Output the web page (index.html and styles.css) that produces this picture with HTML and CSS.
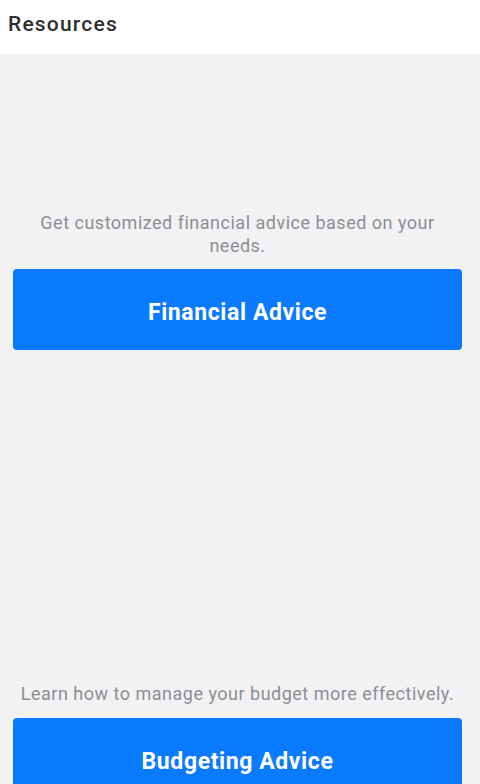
FILE: index.html
```html
<!DOCTYPE html>
<html>
<head>
<meta charset="utf-8">
<link rel="stylesheet" href="styles.css">
</head>
<body>
<header class="header"><h1 class="title">Resources</h1></header>
<main class="content">
  <section class="block block-first">
    <p class="desc">Get customized financial advice based on your needs.</p>
    <button class="btn">Financial Advice</button>
  </section>
  <section class="block block-second">
    <p class="desc">Learn how to manage your budget more effectively.</p>
    <button class="btn">Budgeting Advice</button>
  </section>
</main>
</body>
</html>
```
FILE: styles.css
```css
html, body {
  margin: 0;
  padding: 0;
  height: 100%;
  overflow: hidden;
}
body {
  font-family: Roboto, "Noto Sans", sans-serif;
  background: #f2f1f4;
}
.header {
  background: #ffffff;
  height: 54px;
  display: flex;
  align-items: flex-start;
  padding-left: 8px;
}
.title {
  margin: 0;
  margin-top: 11px;
  font-size: 21px;
  line-height: 26px;
  letter-spacing: 1.2px;
  font-weight: 500;
  color: #2e2e2e;
}
.content {
  display: flex;
  flex-direction: column;
  padding: 0 18px 0 13px;
}
.block {
  display: flex;
  flex-direction: column;
  align-items: stretch;
}
.block-first {
  margin-top: 157px;
}
.block-second {
  margin-top: 332px;
}
.desc {
  margin: 0 0 12px;
  font-size: 18px;
  line-height: 23px;
  letter-spacing: 0.5px;
  color: #8e8e92;
  text-align: center;
  padding: 0 20px;
}
.block-second .desc {
  padding: 0;
  margin-bottom: 13px;
}
.btn {
  border: none;
  background: #0a7aff;
  color: #ffffff;
  border-radius: 4px;
  height: 81px;
  padding: 5px 0 0;
  font-family: Roboto, "Noto Sans", sans-serif;
  font-size: 23px;
  letter-spacing: 0.6px;
  font-weight: 700;
}
```
